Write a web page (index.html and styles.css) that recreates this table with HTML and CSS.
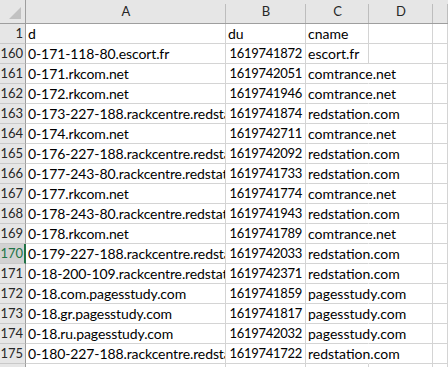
FILE: index.html
```html
<!DOCTYPE html>
<html>
<head>
<meta charset="utf-8">
<link rel="stylesheet" href="styles.css">
</head>
<body>
<table class="sheet">
  <colgroup>
    <col class="c-rh"><col class="c-a"><col class="c-b"><col class="c-c"><col class="c-d"><col class="c-e">
  </colgroup>
  <thead>
    <tr class="hdr">
      <th class="corner"><span class="tri"></span></th>
      <th class="colh">A</th>
      <th class="colh">B</th>
      <th class="colh">C</th>
      <th class="colh">D</th>
      <th class="colh last"></th>
    </tr>
  </thead>
  <tbody>
    <tr><th class="rowh">1</th><td class="a">d</td><td class="b txt">du</td><td class="c">cname</td><td class="d"></td><td class="e"></td></tr>
    <tr><th class="rowh">160</th><td class="a">0-171-118-80.escort.fr</td><td class="b">1619741872</td><td class="c">escort.fr</td><td class="d"></td><td class="e"></td></tr>
    <tr><th class="rowh">161</th><td class="a">0-171.rkcom.net</td><td class="b">1619742051</td><td class="c ovf">comtrance.net</td><td class="d"></td><td class="e"></td></tr>
    <tr><th class="rowh">162</th><td class="a">0-172.rkcom.net</td><td class="b">1619741946</td><td class="c ovf">comtrance.net</td><td class="d"></td><td class="e"></td></tr>
    <tr><th class="rowh">163</th><td class="a">0-173-227-188.rackcentre.redstation.com</td><td class="b">1619741874</td><td class="c ovf">redstation.com</td><td class="d"></td><td class="e"></td></tr>
    <tr><th class="rowh">164</th><td class="a">0-174.rkcom.net</td><td class="b">1619742711</td><td class="c ovf">comtrance.net</td><td class="d"></td><td class="e"></td></tr>
    <tr><th class="rowh">165</th><td class="a">0-176-227-188.rackcentre.redstation.com</td><td class="b">1619742092</td><td class="c ovf">redstation.com</td><td class="d"></td><td class="e"></td></tr>
    <tr><th class="rowh">166</th><td class="a">0-177-243-80.rackcentre.redstation.com</td><td class="b">1619741733</td><td class="c ovf">redstation.com</td><td class="d"></td><td class="e"></td></tr>
    <tr><th class="rowh">167</th><td class="a">0-177.rkcom.net</td><td class="b">1619741774</td><td class="c ovf">comtrance.net</td><td class="d"></td><td class="e"></td></tr>
    <tr><th class="rowh">168</th><td class="a">0-178-243-80.rackcentre.redstation.com</td><td class="b">1619741943</td><td class="c ovf">redstation.com</td><td class="d"></td><td class="e"></td></tr>
    <tr><th class="rowh">169</th><td class="a">0-178.rkcom.net</td><td class="b">1619741789</td><td class="c ovf">comtrance.net</td><td class="d"></td><td class="e"></td></tr>
    <tr><th class="rowh sel">170</th><td class="a">0-179-227-188.rackcentre.redstation.com</td><td class="b">1619742033</td><td class="c ovf">redstation.com</td><td class="d"></td><td class="e"></td></tr>
    <tr><th class="rowh">171</th><td class="a">0-18-200-109.rackcentre.redstation.com</td><td class="b">1619742371</td><td class="c ovf">redstation.com</td><td class="d"></td><td class="e"></td></tr>
    <tr><th class="rowh">172</th><td class="a">0-18.com.pagesstudy.com</td><td class="b">1619741859</td><td class="c ovf">pagesstudy.com</td><td class="d"></td><td class="e"></td></tr>
    <tr><th class="rowh">173</th><td class="a">0-18.gr.pagesstudy.com</td><td class="b">1619741817</td><td class="c ovf">pagesstudy.com</td><td class="d"></td><td class="e"></td></tr>
    <tr><th class="rowh">174</th><td class="a">0-18.ru.pagesstudy.com</td><td class="b">1619742032</td><td class="c ovf">pagesstudy.com</td><td class="d"></td><td class="e"></td></tr>
    <tr><th class="rowh">175</th><td class="a">0-180-227-188.rackcentre.redstation.com</td><td class="b">1619741722</td><td class="c ovf">redstation.com</td><td class="d"></td><td class="e"></td></tr>
    <tr><th class="rowh">176</th><td class="a"></td><td class="b"></td><td class="c"></td><td class="d"></td><td class="e"></td></tr>
  </tbody>
</table>
</body>
</html>
```

FILE: styles.css
```css
html, body {
  margin: 0;
  padding: 0;
  background: #ffffff;
  overflow: hidden;
}

.sheet {
  border-collapse: separate;
  border-spacing: 0;
  table-layout: fixed;
  width: 448px;
  font-family: Lato, "Open Sans", sans-serif;
  font-size: 14px;
  color: #000000;
}

.c-rh { width: 26px; }
.c-a { width: 200px; }
.c-b { width: 80px; }
.c-c { width: 63px; }
.c-d { width: 64px; }
.c-e { width: 15px; }

.hdr th {
  height: 23px;
  padding: 0;
  box-sizing: border-box;
  background-color: #e6e6e6;
  border-bottom: 1px solid #9e9e9e;
  font-weight: normal;
  font-size: 13px;
  color: #262626;
  vertical-align: middle;
  line-height: 23px;
}

.colh {
  text-align: center;
  padding-top: 3px;
  background-image: linear-gradient(#bdbdbd, #bdbdbd);
  background-repeat: no-repeat;
  background-position: right 4px;
  background-size: 1px 100%;
  line-height: 19px;
}

.corner {
  border-right: 1px solid #9e9e9e;
  position: relative;
}

.tri {
  position: absolute;
  right: 4px;
  bottom: 4px;
  width: 0;
  height: 0;
  border-left: 12px solid transparent;
  border-bottom: 12px solid #c1c1c1;
}

tbody th,
tbody td {
  height: 20px;
  box-sizing: border-box;
  padding: 0 3px 0 2px;
  line-height: 19px;
  white-space: nowrap;
  vertical-align: bottom;
  border-bottom: 1px solid #d4d4d4;
  border-right: 1px solid #d4d4d4;
}

.rowh {
  background: #e6e6e6;
  border-right-color: #9e9e9e !important;
  border-bottom-color: #c9c9c9 !important;
  text-align: right;
  font-weight: normal;
  font-size: 13px;
  color: #262626;
  padding: 0 2px 0 0;
}

.rowh.sel {
  background: #d2d2d2;
  color: #217346;
  border-right: 2px solid #217346 !important;
  padding-right: 1px;
}

.a {
  overflow: hidden;
  text-overflow: clip;
  padding-left: 2px;
  letter-spacing: -0.1px;
}

.b {
  text-align: right;
  padding-right: 3px;
  font-size: 13px;
  letter-spacing: -0.3px;
}

.b.txt {
  text-align: left;
  padding-left: 2px;
  font-size: 14px;
  letter-spacing: 0;
}

.c {
  overflow: visible;
  padding-left: 2px;
}

.c.ovf {
  border-right-color: transparent;
}
```
